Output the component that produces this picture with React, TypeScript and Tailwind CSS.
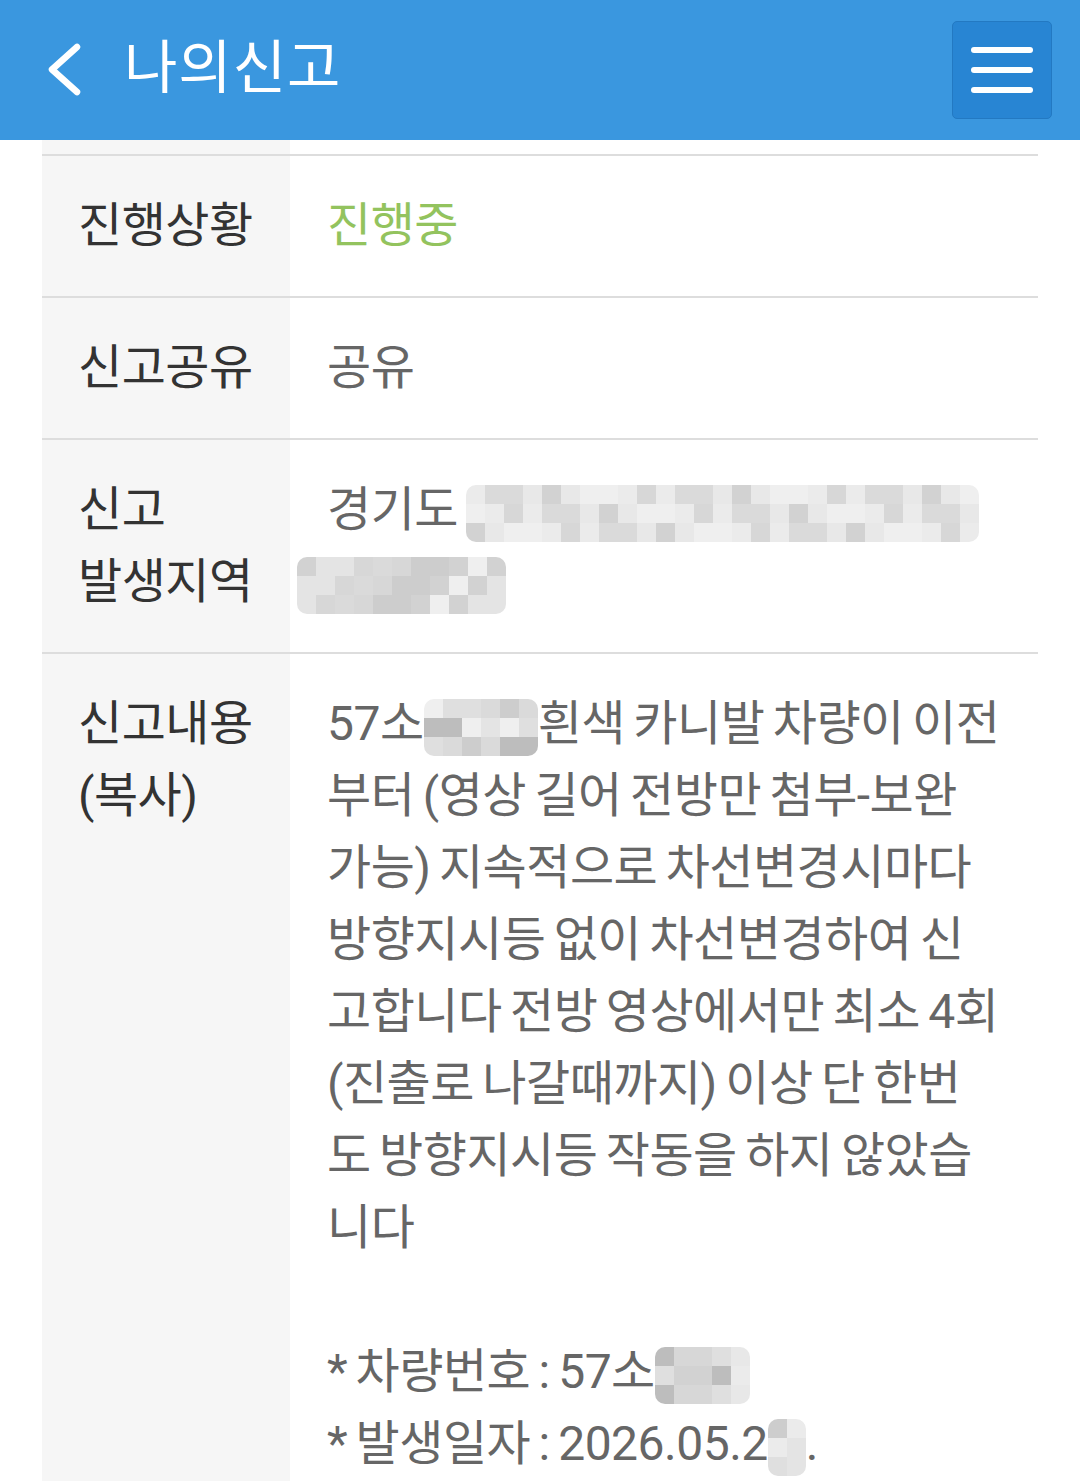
import React from 'react';

const SHADES = ['#e4e4e4', '#dadada', '#d2d2d2', '#ebebeb', '#dfdfdf', '#cdcdcd', '#efefef', '#d7d7d7', '#e8e8e8', '#bdbdbd'];

function Mosaic({ cols, rows, cell, seed }: { cols: number; rows: number; cell: number; seed: number }) {
  const cells = [];
  for (let i = 0; i < cols * rows; i++) {
    const idx = (i * 7 + seed * 3 + ((i * i) % 5)) % SHADES.length;
    cells.push(<div key={i} style={{ width: cell, height: cell, background: SHADES[idx] }} />);
  }
  return (
    <div
      className="inline-flex flex-wrap align-middle rounded-[10px] overflow-hidden"
      style={{ width: cols * cell, height: rows * cell }}
    >
      {cells}
    </div>
  );
}

function Row({ label, children, last }: { label: React.ReactNode; children: React.ReactNode; last?: boolean }) {
  return (
    <div className={`flex ${last ? '' : 'border-b-2 border-[#dddddd]'}`}>
      <div className="w-[248px] shrink-0 bg-[#f6f6f6] pl-[36px] py-[34px] text-[#333333]">{label}</div>
      <div className="flex-1 pl-[37px] py-[34px] text-[#666666]">{children}</div>
    </div>
  );
}

export default function App() {
  return (
    <div
      className="w-[1080px] h-[1481px] overflow-hidden bg-white"
      style={{ fontFamily: "Roboto, 'Noto Sans CJK KR', sans-serif" }}
    >
      {/* Header */}
      <header className="h-[140px] bg-[#3a97df] flex items-center">
        <button type="button" className="ml-[44px] w-[40px] h-[60px] flex items-center justify-center" aria-label="back">
          <svg width="36" height="56" viewBox="0 0 36 56" fill="none">
            <path d="M31 5 L6 27.5 L31 50" stroke="white" strokeWidth="6.5" strokeLinecap="round" strokeLinejoin="round" />
          </svg>
        </button>
        <h1 className="ml-[40px] text-white text-[58px] leading-none tracking-[1px] pb-[4px]">나의신고</h1>
        <div className="flex-1" />
        <button
          type="button"
          className="mr-[28px] w-[100px] h-[98px] rounded-[5px] bg-[#2885d3] border border-[#2379c2] flex flex-col items-center justify-center gap-[14px]"
          aria-label="menu"
        >
          <span className="block w-[62px] h-[6px] rounded-full bg-white" />
          <span className="block w-[62px] h-[6px] rounded-full bg-white" />
          <span className="block w-[62px] h-[6px] rounded-full bg-white" />
        </button>
      </header>

      {/* Table */}
      <div className="mx-[42px] text-[48px] leading-[72px] tracking-[-0.5px] [word-spacing:-3px]">
        <div className="flex h-[16px] border-b-2 border-[#dddddd]">
          <div className="w-[248px] bg-[#f6f6f6]" />
        </div>

        <Row label="진행상황">
          <span className="text-[#93c35e]">진행중</span>
        </Row>

        <Row label="신고공유">공유</Row>

        <Row
          label={
            <>
              <div>신고</div>
              <div>발생지역</div>
            </>
          }
        >
          <div className="whitespace-nowrap">
            경기도 <Mosaic cols={27} rows={3} cell={19} seed={1} />
          </div>
          <div className="-ml-[30px]">
            <Mosaic cols={11} rows={3} cell={19} seed={4} />
          </div>
        </Row>

        <Row
          last
          label={
            <>
              <div>신고내용</div>
              <div>(복사)</div>
            </>
          }
        >
          <div className="whitespace-nowrap">
            <div>
              57소<Mosaic cols={6} rows={3} cell={19} seed={2} />흰색 카니발 차량이 이전
            </div>
            <div>부터 (영상 길어 전방만 첨부-보완</div>
            <div>가능) 지속적으로 차선변경시마다</div>
            <div>방향지시등 없이 차선변경하여 신</div>
            <div>고합니다 전방 영상에서만 최소 4회</div>
            <div>(진출로 나갈때까지) 이상 단 한번</div>
            <div>도 방향지시등 작동을 하지 않았습</div>
            <div>니다</div>
            <div className="h-[72px]" />
            <div>
              * 차량번호 : 57소<Mosaic cols={5} rows={3} cell={19} seed={3} />
            </div>
            <div>
              * 발생일자 : 2026.05.2<Mosaic cols={2} rows={3} cell={19} seed={5} />.
            </div>
          </div>
        </Row>
        <div className="flex h-[400px]">
          <div className="w-[248px] bg-[#f6f6f6]" />
        </div>
      </div>
    </div>
  );
}
